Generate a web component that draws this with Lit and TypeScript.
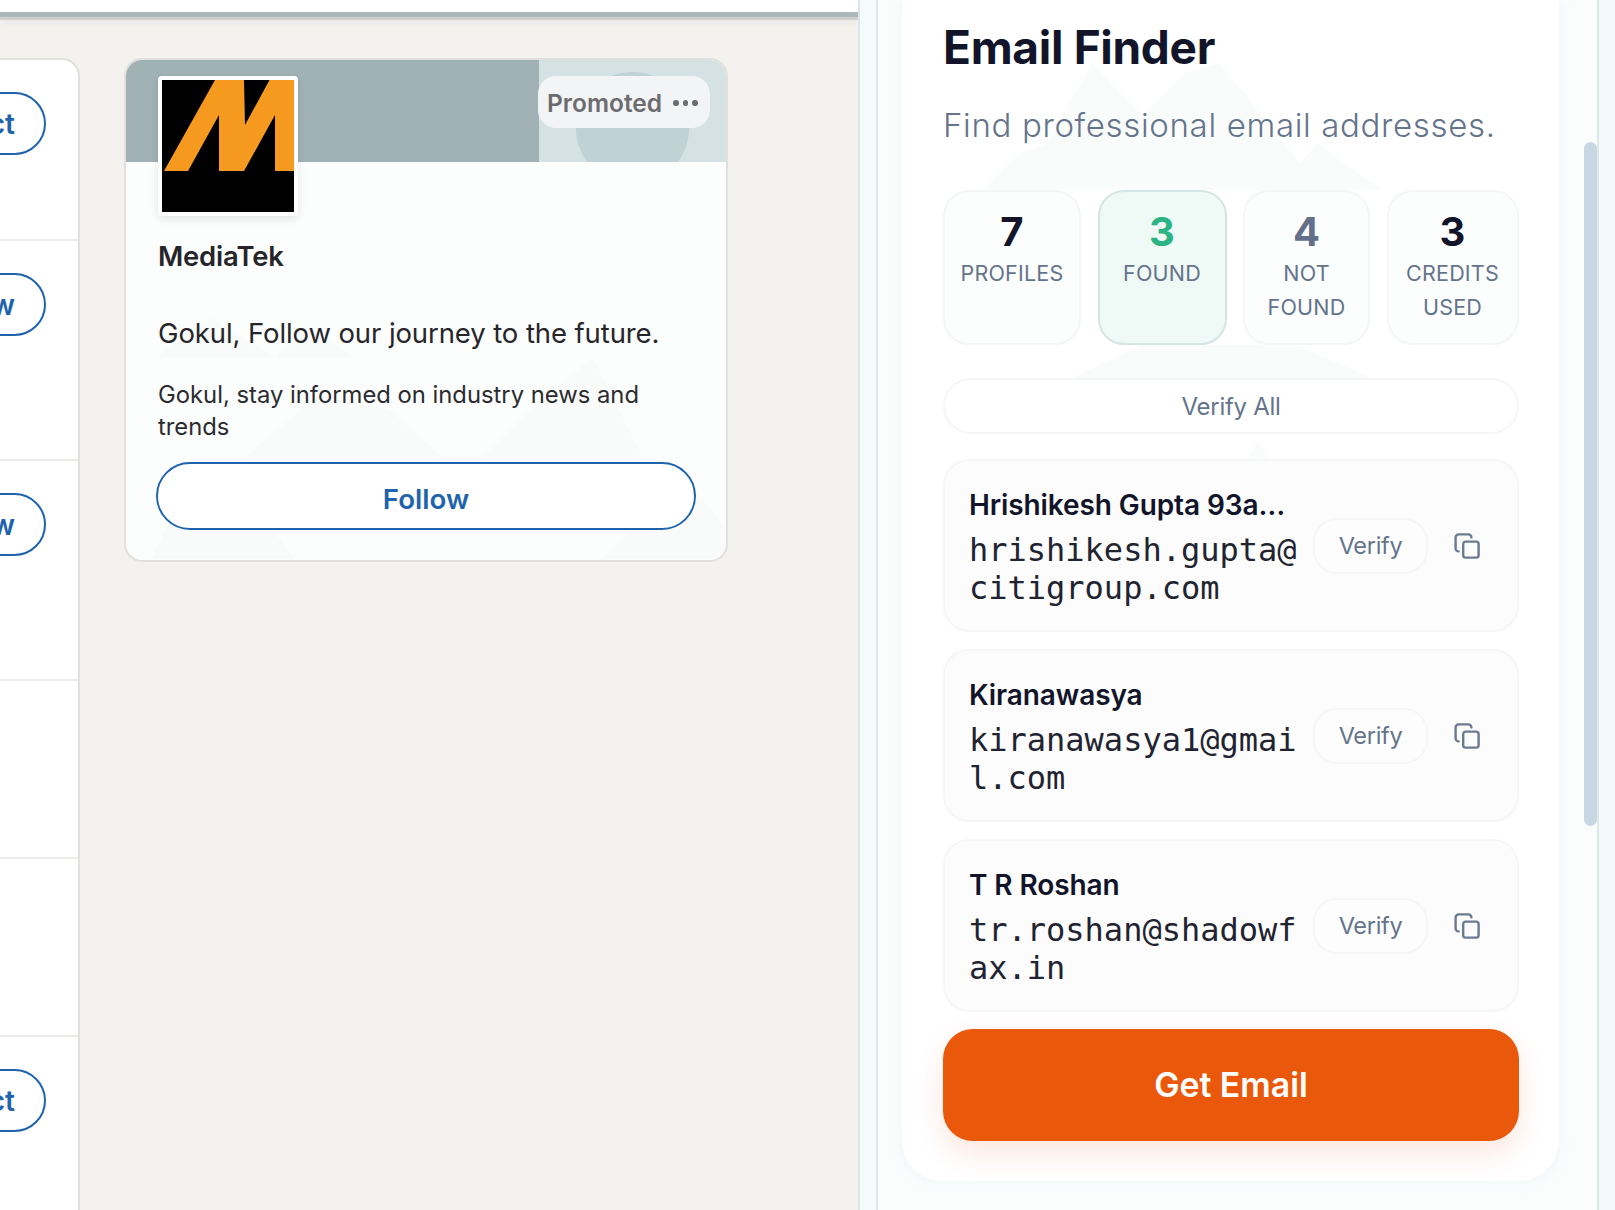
import { LitElement, html, css, svg } from "lit";
import { customElement } from "lit/decorators.js";

const copyIcon = html`<svg class="copy" viewBox="0 0 26 26" fill="none" stroke="#6b7a90" stroke-width="2.4" stroke-linecap="round" stroke-linejoin="round"><rect x="9.2" y="8.6" width="15.4" height="16" rx="2.4"></rect><path d="M4.6 18.4 A3 3 0 0 1 1.6 15.4 V4.4 A3 3 0 0 1 4.6 1.4 H14.4 A3 3 0 0 1 17.4 4.4"></path></svg>`;

const mountains = (points: string[]) => svg`${points.map((p) => svg`<polygon points=${p}></polygon>`)}`;

const rows = [
  { name: "Hrishikesh Gupta 93a…", email: "hrishikesh.gupta@citigroup.com" },
  { name: "Kiranawasya", email: "kiranawasya1@gmail.com" },
  { name: "T R Roshan", email: "tr.roshan@shadowfax.in" },
];

const stats = [
  { v: "7", l: "Profiles", c: "" },
  { v: "3", l: "Found", c: "found" },
  { v: "4", l: "Not Found", c: "nf" },
  { v: "3", l: "Credits Used", c: "" },
];

@customElement("app-root")
export class AppRoot extends LitElement {
  static styles = css`
    :host { display: block; width: 1615px; height: 1210px; overflow: hidden; background: #f4f2ee; font-family: Inter, "Liberation Sans", sans-serif; }
    .page { display: flex; height: 1210px; }
    .main { width: 858px; flex: none; display: flex; flex-direction: column; }
    .topbar { height: 12px; flex: none; background: #fff; box-shadow: 0 5px 0 #adb8ba, 0 8px 0 #cfd0cd, 0 12px 6px #ebeae6; position: relative; }
    .feed { flex: 1; display: flex; align-items: flex-start; gap: 44px; padding-top: 46px; min-height: 0; }
    .people { width: 80px; height: 1152px; flex: none; background: #fff; border: solid #e1e0dc; border-width: 2px 2px 0 0; border-top-right-radius: 18px; overflow: hidden; box-sizing: border-box; }
    .person { display: flex; justify-content: flex-end; padding: 32px 32px 0 0; box-sizing: border-box; border-bottom: 2px solid #ececea; }
    .pbtn { flex: none; height: 63px; box-sizing: border-box; padding: 0 29px; border: 2px solid #1f63ad; border-radius: 32px; background: #fff; color: #1f63ad; font: 600 28px/61px Inter, sans-serif; }
    .ad { width: 604px; height: 504px; flex: none; box-sizing: border-box; position: relative; overflow: hidden; background: #fcfdfd; border: 2px solid #e1e0dc; border-radius: 18px; }
    .deco { position: absolute; left: 0; top: 0; width: 100%; height: 100%; fill: #f9fbfb; pointer-events: none; }
    .banner { height: 102px; display: flex; position: relative; overflow: hidden; }
    .bl { width: 413px; background: #a0b2b6; }
    .br { flex: 1; background: #d4e2e3; position: relative; overflow: hidden; }
    .circle { position: absolute; left: 37px; top: 12px; width: 113px; height: 113px; border-radius: 50%; background: #bfd2d6; }
    .pill { position: absolute; right: 16px; top: 16px; height: 52px; width: 172px; box-sizing: border-box; background: #f3f4f6; border-radius: 18px; display: flex; align-items: center; gap: 11px; padding: 2px 0 0 9px; color: #6c6c70; font-size: 24.5px; font-weight: 600; }
    .dots { display: flex; gap: 4px; }
    .dots i { width: 5.5px; height: 5.5px; border-radius: 50%; background: #6c6c70; }
    .body { position: relative; padding: 0 30px; }
    .logo { position: relative; margin: -86px 0 0 2px; width: 132px; height: 132px; background: #000; border: 4px solid #fff; border-radius: 4px; box-shadow: 0 3px 8px rgba(0,0,0,.1); display: block; }
    .logo svg { display: block; width: 132px; height: 132px; }
    .co { margin: 20px 0 0 0; padding-left: 2px; font-size: 27.4px; font-weight: 600; line-height: 40px; color: #26262a; letter-spacing: -.2px; }
    .hd { margin: 37px 0 0 0; padding-left: 2px; font-size: 27.5px; line-height: 40px; color: #26262a; letter-spacing: -.1px; }
    .tx { margin: 26px 0 0; padding-left: 2px; font-size: 23.8px; line-height: 32px; color: #2c2c30; width: 510px; }
    .fbtn { display: block; margin: 19px 0 0 0; width: 540px; height: 68px; border: 2px solid #1f63ad; border-radius: 34px; box-sizing: border-box; background: #fff; color: #1f63ad; font: 600 27.7px/70px Inter, sans-serif; text-align: center; position: relative; }

    .side { flex: 1; display: flex; background: #f4f9f9; border-left: 2px solid #dbe8e8; position: relative; }
    .gutter { width: 16px; flex: none; background: #f5fafa; border-right: 2px solid #dbe8e8; }
    .scrollarea { flex: 1; position: relative; background: #fbfdfd; padding-left: 24px; border-right: 2px solid #dbe8e8; margin-right: 16px; min-width: 0; }
    .sb { position: absolute; right: 0; top: 142px; width: 13px; height: 684px; background: #c9d6e3; border-radius: 7px; }
    .card { width: 657px; height: 1181px; box-sizing: border-box; padding: 21px 40px 0 41px; background: #fff; border-radius: 0 0 40px 40px; box-shadow: 0 0 14px rgba(200,215,215,.25); position: relative; overflow: visible; }
    .card .deco { fill: #fafcfc; }
    .card > *:not(.deco) { position: relative; }
    h1 { margin: 0; font: 700 46px/52px Inter, sans-serif; color: #12152a; letter-spacing: -.3px; }
    .sub { margin: 29px 0 0; font: 300 33px/46px Inter, sans-serif; color: #64748b; letter-spacing: .65px; white-space: nowrap; }
    .stats { display: grid; grid-template-columns: 138px 129px 127px 132px; gap: 16.5px; margin-top: 42px; }
    .stat { height: 155px; box-sizing: border-box; background: rgba(252,253,253,.85); border: 2px solid #f4f6f8; border-radius: 26px; text-align: center; padding-top: 15px; }
    .stat.found { background: #eff9f6; border-color: #d4e6e3; }
    .num { font: 700 40px/50px Inter, sans-serif; color: #12152a; }
    .found .num { color: #2bb485; }
    .nf .num { color: #64708a; }
    .lbl { font: 400 21.5px/34px Inter, sans-serif; color: #64748b; text-transform: uppercase; letter-spacing: .2px; margin-top: -1px; }
    .vall { display: block; margin-top: 33px; height: 56px; box-sizing: border-box; border: 2px solid #f4f6f8; border-radius: 28px; background: rgba(255,255,255,.7); text-align: center; font: 400 24px/54px Inter, sans-serif; color: #64748b; letter-spacing: -.3px; }
    .rows { display: flex; flex-direction: column; gap: 17px; margin-top: 25px; }
    .row { height: 173px; box-sizing: border-box; display: flex; align-items: center; padding: 0 37px 0 24px; background: #fcfcfd; border: 2px solid #f4f6f8; border-radius: 26px; }
    .who { width: 328px; flex: none; padding-top: 2px; }
    .name { font: 600 28px/36px Inter, sans-serif; color: #12152a; white-space: nowrap; letter-spacing: -.1px; }
    .email { margin-top: 8px; font: 400 32px/38px "DejaVu Sans Mono", monospace; color: #1f2430; word-break: break-all; }
    .vbtn { margin-left: 16px; flex: none; width: 115px; height: 56px; box-sizing: border-box; border: 2px solid #f4f6f8; border-radius: 24px; background: #fdfdfe; text-align: center; font: 400 23.5px/52px Inter, sans-serif; color: #64748b; letter-spacing: -.3px; }
    .copy { margin-left: 26px; flex: none; width: 26px; height: 26px; display: block; }
    .get { display: block; margin-top: 17px; height: 112px; border-radius: 30px; background: #ea580c; color: #fff; text-align: center; font: 600 33.8px/112px Inter, sans-serif; box-shadow: 0 12px 28px rgba(234,88,12,.14); }
  `;

  render() {
    const heights = [181, 220, 220, 178, 178, 176];
    const labels = ["Connect", "Follow", "Follow", "", "", "Connect"];
    return html`
      <div class="page">
        <div class="main">
          <div class="topbar"></div>
          <div class="feed">
            <div class="people">
              ${heights.map((h, i) => html`
                <div class="person" style="height:${h}px">
                  ${labels[i] ? html`<div class="pbtn">${labels[i]}</div>` : ""}
                </div>`)}
            </div>
            <div class="ad">
              <svg class="deco" viewBox="0 0 604 504">${mountains([
                "25,503 65,419 85,440 105,419 170,503",
                "30,300 85,260 150,300 185,270 230,300",
                "120,400 190,340 265,352 340,420 410,350 470,300 520,400",
                "480,503 560,420 603,470 603,503",
              ])}</svg>
              <div class="banner">
                <div class="bl"></div>
                <div class="br"><div class="circle"></div></div>
                <div class="pill">Promoted <span class="dots"><i></i><i></i><i></i></span></div>
              </div>
              <div class="body">
                <div class="logo"><svg viewBox="0 0 132 132"><polygon fill="#f59a1f" points="2,91 53,0 82,0 83,45 107.500,0 132,0 132,91 113,91 113,35 82,91 57,91 57,35 26,91"></polygon></svg></div>
                <div class="co">MediaTek</div>
                <div class="hd">Gokul, Follow our journey to the future.</div>
                <div class="tx">Gokul, stay informed on industry news and trends</div>
                <div class="fbtn">Follow</div>
              </div>
            </div>
          </div>
        </div>
        <div class="side">
          <div class="gutter"></div>
          <div class="scrollarea">
            <div class="card">
              <svg class="deco" viewBox="0 0 657 1181">${mountains([
                "118,190 190,63 240,115 284,72 318,63 420,190",
                "80,190 118,153 153,142 190,190",
                "280,190 353,143 385,180 415,143 480,190",
                "170,378 240,345 395,345 470,378",
                "345,460 356,440 367,460",
              ])}</svg>
              <h1>Email Finder</h1>
              <p class="sub">Find professional email addresses.</p>
              <div class="stats">
                ${stats.map((s) => html`<div class="stat ${s.c}"><div class="num">${s.v}</div><div class="lbl">${s.l}</div></div>`)}
              </div>
              <div class="vall">Verify All</div>
              <div class="rows">
                ${rows.map((r) => html`
                  <div class="row">
                    <div class="who"><div class="name">${r.name}</div><div class="email">${r.email}</div></div>
                    <div class="vbtn">Verify</div>
                    ${copyIcon}
                  </div>`)}
              </div>
              <div class="get">Get Email</div>
            </div>
            <div class="sb"></div>
          </div>
        </div>
      </div>
    `;
  }
}
